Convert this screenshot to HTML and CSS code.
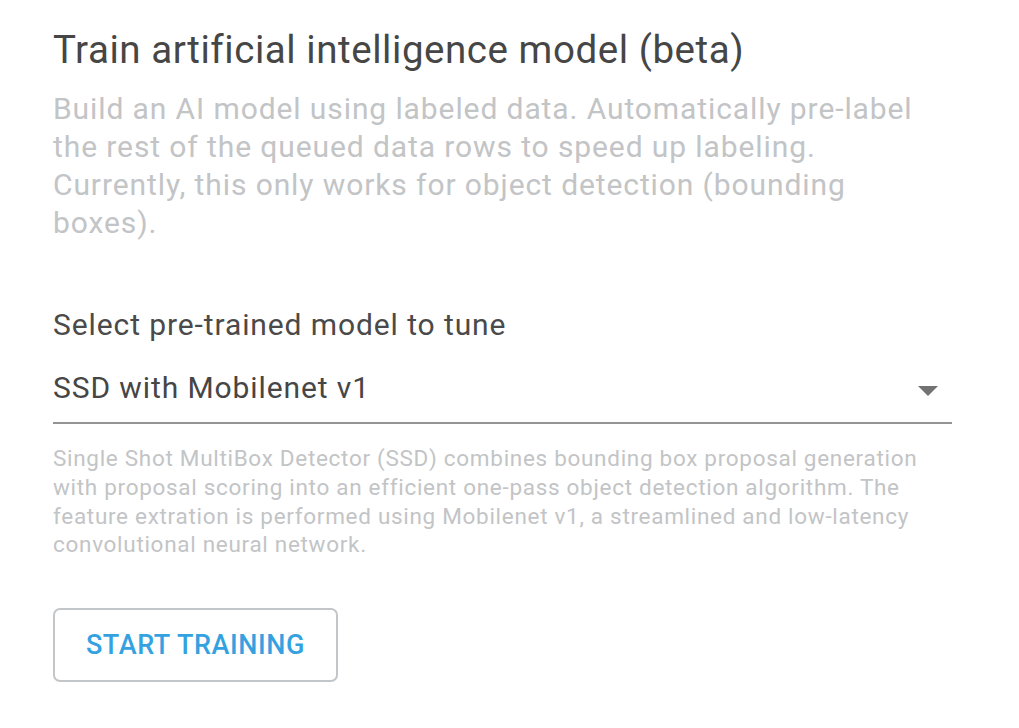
FILE: index.html
```html
<!DOCTYPE html>
<html>
<head>
<meta charset="utf-8">
<link rel="stylesheet" href="styles.css">
</head>
<body>
<main class="panel">
  <h1 class="title">Train artificial intelligence model (beta)</h1>
  <p class="desc">Build an AI model using labeled data. Automatically pre-label the rest of the queued data rows to speed up labeling. Currently, this only works for object detection (bounding boxes).</p>
  <div class="field">
    <div class="label">Select pre-trained model to tune</div>
    <div class="select">
      <span class="value">SSD with Mobilenet v1</span>
      <svg class="arrow" width="20" height="10" viewBox="0 0 20 10"><path d="M0 0 L20 0 L10 10 Z" fill="#727272"/></svg>
    </div>
    <p class="helper">Single Shot MultiBox Detector (SSD) combines bounding box proposal generation with proposal scoring into an efficient one-pass object detection algorithm. The feature extration is performed using Mobilenet v1, a streamlined and low-latency convolutional neural network.</p>
  </div>
  <button class="btn">START TRAINING</button>
</main>
</body>
</html>
```
FILE: styles.css
```css
html, body {
  margin: 0;
  padding: 0;
  background: #ffffff;
}
body {
  font-family: Roboto, "Liberation Sans", sans-serif;
}
.panel {
  padding: 22px 0 0 53px;
  width: 899px;
}
.title {
  margin: 0;
  font-size: 38.5px;
  font-weight: 400;
  letter-spacing: 0.55px;
  line-height: 56px;
  color: #464646;
}
.desc {
  margin: 11.5px 0 0;
  font-size: 30px;
  letter-spacing: 0.9px;
  line-height: 38.3px;
  color: #c2c4c6;
}
.field {
  margin-top: 62px;
}
.label {
  font-size: 30px;
  letter-spacing: 0.9px;
  line-height: 40px;
  color: #4a4a4a;
}
.select {
  margin-top: 23.4px;
  display: flex;
  align-items: center;
  justify-content: space-between;
  border-bottom: 2px solid #949494;
  padding-bottom: 13.6px;
}
.value {
  font-size: 30px;
  letter-spacing: 0.9px;
  line-height: 40px;
  color: #464646;
}
.arrow {
  margin: 6px 14px 0 0;
}
.helper {
  margin: 20.6px 0 0;
  font-size: 22.5px;
  letter-spacing: 0.7px;
  line-height: 28.7px;
  color: #c2c4c6;
}
.btn {
  display: block;
  margin-top: 49px;
  width: 285px;
  height: 74px;
  background: #ffffff;
  border: 2px solid #c3c6c9;
  border-radius: 7px;
  font-family: Roboto, "Liberation Sans", sans-serif;
  font-size: 27px;
  font-weight: 500;
  letter-spacing: 0.6px;
  color: #34a2e0;
  padding: 0;
}
```
